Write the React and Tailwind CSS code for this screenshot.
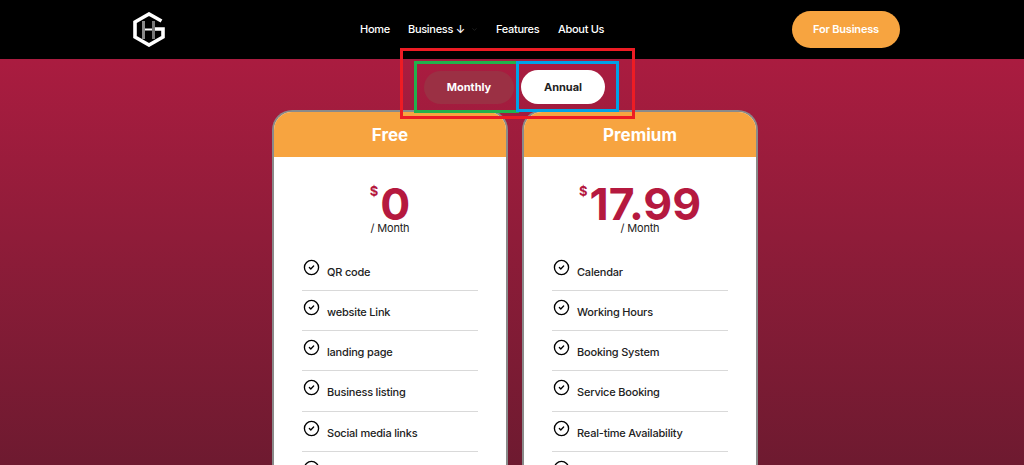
import React from 'react';
import { CircleCheck, ChevronDown } from 'lucide-react';

const plans = [
  {
    name: 'Free',
    price: '0',
    features: ['QR code', 'website Link', 'landing page', 'Business listing', 'Social media links', ''],
  },
  {
    name: 'Premium',
    price: '17.99',
    features: ['Calendar', 'Working Hours', 'Booking System', 'Service Booking', 'Real-time Availability', ''],
  },
];

const Logo = () => (
  <svg width="32" height="35" viewBox="0 0 32 35" fill="none">
    <path d="M28.5 9 L16 2 L2 10 V25 L16 33 L30 25 V17 H21" stroke="#fff" strokeWidth="3.6" />
    <path d="M10.5 9 V27" stroke="#8a8a8a" strokeWidth="3" />
    <path d="M20.5 9 V27" stroke="#777" strokeWidth="3" />
    <path d="M12 17.5 H19" stroke="#fff" strokeWidth="2" />
  </svg>
);

const Header = () => (
  <header className="h-[59px] bg-black flex items-center pl-[133px] pr-[124px] shrink-0">
    <div className="w-[32px] shrink-0">
      <Logo />
    </div>
    <nav className="ml-[195px] flex items-center text-[11px] tracking-[-0.3px] font-medium text-white">
      <a className="w-[48px]">Home</a>
      <a className="w-[88px] flex items-center">
        Business ↓
        <ChevronDown size={7} className="ml-[6px] text-[#333]" />
      </a>
      <a className="w-[62px]">Features</a>
      <a>About Us</a>
    </nav>
    <button className="ml-auto w-[108px] h-[37px] -mt-[1px] rounded-full bg-[#f7a440] text-white text-[11px] tracking-[-0.2px] font-semibold">
      For Business
    </button>
  </header>
);

const Toggle = () => (
  <div className="flex justify-center items-center h-[51px] pt-[5px] pl-[5px]">
    <button className="w-[90px] h-[33px] rounded-full bg-[#9b3044] text-white text-[11px] font-bold">Monthly</button>
    <button className="ml-[7px] w-[84px] h-[34px] rounded-full bg-white text-[#222] text-[11px] font-bold">Annual</button>
  </div>
);

const PlanCard = ({ plan }) => (
  <div className="w-[236px] h-[400px] shrink-0 rounded-t-[20px] border-2 border-b-0 border-[#8a8a8a] bg-white overflow-hidden">
    <div className="h-[45px] pt-[2px] bg-[#f7a440] flex items-center justify-center text-white text-[17px] font-bold">
      {plan.name}
    </div>
    <div className="flex flex-col items-center pt-[30px]">
      <div className="flex items-start text-[#b5193f] font-bold leading-none">
        <span className="text-[13px] -mt-[2px] mr-[2px]">$</span>
        <span className="text-[44.5px] leading-[34px]">{plan.price}</span>
      </div>
      <span className="text-[11px] tracking-[-0.2px] leading-[14px] text-[#222] mt-0">/ Month</span>
    </div>
    <ul className="mx-[28px] mt-[15.6px]">
      {plan.features.map((f, i) => (
        <li key={i} className="h-[40.3px] border-b border-[#d9d9d9] flex items-start pl-[1px] pt-[8px] text-[11px] tracking-[-0.2px] font-medium text-[#222]">
          <CircleCheck size={17} strokeWidth={1.9} className="text-black shrink-0" />
          <span className="ml-[7px] mt-[6px] leading-[14px]">{f}</span>
        </li>
      ))}
    </ul>
  </div>
);

// red / green / blue boxes drawn over the toggle in the screenshot
const Markers = () => (
  <>
    <div className="absolute left-[400px] top-[48px] w-[235px] h-[71px] border-[3px] border-[#ed1c24]" />
    <div className="absolute left-[414px] top-[61px] w-[105px] h-[52px] border-[3px] border-[#22b14c]" />
    <div className="absolute left-[516px] top-[61px] w-[103px] h-[51px] border-[3px] border-[#00a2e8]" />
  </>
);

export default function App() {
  return (
    <div className="relative w-[1024px] h-[465px] overflow-hidden flex flex-col font-['Inter',sans-serif]">
      <Header />
      <main className="flex-1 bg-gradient-to-b from-[#aa1c40] to-[#6e1a30] overflow-hidden">
        <Toggle />
        <div className="flex justify-center gap-[14px] pl-[6px]">
          {plans.map((p) => (
            <PlanCard key={p.name} plan={p} />
          ))}
        </div>
      </main>
      <Markers />
    </div>
  );
}
